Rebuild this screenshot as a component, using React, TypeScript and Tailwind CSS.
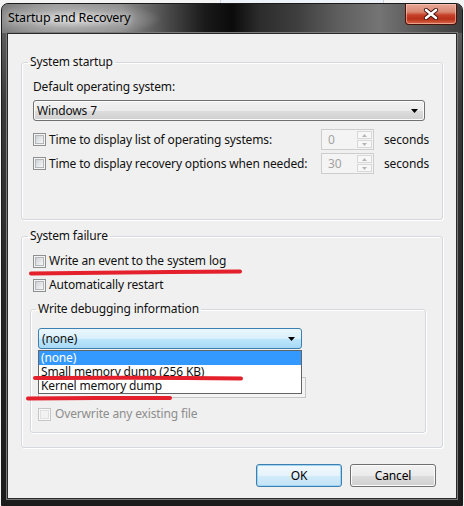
import React from "react";

function CheckBox({ disabled = false }: { disabled?: boolean }) {
  return (
    <span
      className={
        disabled
          ? "flex h-[13px] w-[13px] shrink-0 items-center justify-center border border-[#c6c6c6] bg-[#f7f7f7]"
          : "flex h-[13px] w-[13px] shrink-0 items-center justify-center border border-[#8e8f8f] bg-[#f4f4f4]"
      }
    >
      <span
        className={
          disabled
            ? "h-[9px] w-[9px] border border-[#e0e0e0] bg-[#f2f2f2]"
            : "h-[9px] w-[9px] border border-[#b3b6ba] bg-[linear-gradient(135deg,#cfd2d6,#f7f7f7)]"
        }
      />
    </span>
  );
}

function Arrow() {
  return (
    <svg width="7" height="4" viewBox="0 0 7 4" className="shrink-0">
      <path d="M0 0H7L3.5 4Z" fill="#000" />
    </svg>
  );
}

function Spin({ value }: { value: string }) {
  return (
    <div className="flex h-[21px] w-[53px] border border-[#cdcdcd] bg-[#f4f4f4]">
      <span className="flex-1 pl-[6px] leading-[19px] text-[#a3a3a3]">{value}</span>
      <div className="flex w-[17px] flex-col gap-px p-px">
        <span className="flex flex-1 items-center justify-center border border-[#d8d8d8] bg-[#f8f8f8]">
          <svg width="5" height="3" viewBox="0 0 5 3">
            <path d="M0 3H5L2.5 0Z" fill="#b5b5b5" />
          </svg>
        </span>
        <span className="flex flex-1 items-center justify-center border border-[#d8d8d8] bg-[#f8f8f8]">
          <svg width="5" height="3" viewBox="0 0 5 3">
            <path d="M0 0H5L2.5 3Z" fill="#b5b5b5" />
          </svg>
        </span>
      </div>
    </div>
  );
}

function TimeRow({ label, value }: { label: string; value: string }) {
  return (
    <div className="flex h-[21px] items-center">
      <div className="flex w-[288px] items-center gap-[3px]">
        <CheckBox />
        <span className="leading-[16px]">{label}</span>
      </div>
      <Spin value={value} />
      <span className="ml-[10px] leading-[16px]">seconds</span>
    </div>
  );
}

function CheckRow({ label }: { label: string }) {
  return (
    <div className="flex h-[16px] items-center gap-[3px]">
      <CheckBox />
      <span className="leading-[16px]">{label}</span>
    </div>
  );
}

function PushButton({ label, isDefault = false }: { label: string; isDefault?: boolean }) {
  return (
    <button
      className={
        isDefault
          ? "flex h-[23px] w-[86px] items-center justify-center rounded-[3px] border border-[#3c7fb1] bg-[linear-gradient(180deg,#f2f9fd_0%,#e5f3fb_50%,#d2ebfa_51%,#c4e4f7_100%)] shadow-[inset_0_0_0_1px_#9fd4f3] leading-[16px] text-black"
          : "flex h-[23px] w-[86px] items-center justify-center rounded-[3px] border border-[#707070] bg-[linear-gradient(180deg,#f2f2f2_0%,#ebebeb_50%,#dddddd_51%,#cfcfcf_100%)] shadow-[inset_0_0_0_1px_#fbfbfb] leading-[16px] text-black"
      }
    >
      {label}
    </button>
  );
}

export default function App() {
  return (
    <div className="relative h-[506px] w-[464px] overflow-hidden bg-[#f4f4f4] font-['Noto_Sans','Open_Sans',sans-serif] text-[12px] tracking-[-0.15px] text-[#111]">
      {/* strip of the window lying behind */}
      <div className="flex h-[3px]">
        <div className="ml-[220px] h-[3px] w-[164px] border-x border-[#c9d3e0] bg-[#eef3fa]" />
      </div>

      {/* window frame */}
      <div className="ml-px flex h-[503px] w-[462px] flex-col rounded-t-[7px] border border-[#1a1a1a] bg-[linear-gradient(180deg,#6a6a6a_0%,#3a3a3a_20%,#262626_60%,#1c1c1c_100%)]">
        {/* title bar */}
        <div className="flex h-[29px] shrink-0 items-start justify-between rounded-t-[6px] [background-image:radial-gradient(ellipse_90px_18px_at_70px_15px,rgba(220,220,220,0.95)_0%,rgba(175,175,175,0.6)_55%,rgba(150,150,150,0)_100%),linear-gradient(90deg,#7f7f7f_0%,#9a9a9a_12%,#8c8c8c_26%,#4a4a4a_36%,#1a1a1a_44%,#0b0b0b_50%,#2c2c2c_56%,#3e3e3e_64%,#5e5e5e_73%,#747474_82%,#5a5a5a_90%,#3e3e3e_100%)]">
          <span className="pl-[6px] pt-[5px] text-[12.5px] leading-[18px] text-black [text-shadow:0_0_6px_rgba(255,255,255,0.9)]">
            Startup and Recovery
          </span>
          <div className="mr-[5px] flex h-[21px] w-[52px] items-center justify-center rounded-b-[4px] border border-t-0 border-[#4a1208] bg-[linear-gradient(180deg,#e9a898_0%,#d98671_40%,#c7402a_55%,#b83019_75%,#d86a48_100%)] shadow-[inset_0_0_0_1px_rgba(255,210,200,0.55)]">
            <svg width="16" height="12" viewBox="0 0 16 12">
              <path d="M3 2L13 10M13 2L3 10" stroke="#3a0a04" strokeWidth="4.2" strokeLinecap="round" />
              <path d="M3 2L13 10M13 2L3 10" stroke="#ffffff" strokeWidth="2.6" strokeLinecap="round" />
            </svg>
          </div>
        </div>

        {/* client area */}
        <div className="mx-[5px] mb-[6px] flex h-[467px] w-[450px] flex-col border border-[#2a2a2a] bg-[#f0f0f0] shadow-[0_0_0_1px_#7a7a7a]">
          {/* System startup */}
          <fieldset className="ml-[13px] mt-[20px] h-[166px] w-[422px] rounded-[3px] border border-[#d5d9dd] shadow-[inset_1px_1px_0_#ffffff,1px_1px_0_#ffffff]">
            <legend className="ml-[6px] px-[2px] leading-[16px]">System startup</legend>
            <div className="flex flex-col pl-[11px]">
              <span className="mt-[9px] leading-[16px]">Default operating system:</span>
              <div className="mt-[5px] flex h-[21px] w-[392px] items-center justify-between rounded-[3px] border border-[#707070] bg-[linear-gradient(180deg,#f2f2f2_0%,#ebebeb_50%,#dddddd_51%,#cfcfcf_100%)] pl-[3px] pr-[6px] shadow-[inset_0_0_0_1px_#fbfbfb]">
                <span className="leading-[16px]">Windows 7</span>
                <Arrow />
              </div>
              <div className="mt-[8px]">
                <TimeRow label="Time to display list of operating systems:" value="0" />
              </div>
              <div className="mt-[3px]">
                <TimeRow label="Time to display recovery options when needed:" value="30" />
              </div>
            </div>
          </fieldset>

          {/* System failure */}
          <fieldset className="ml-[13px] mt-[8px] h-[220px] w-[422px] rounded-[3px] border border-[#d5d9dd] shadow-[inset_1px_1px_0_#ffffff,1px_1px_0_#ffffff]">
            <legend className="ml-[6px] px-[2px] leading-[16px]">System failure</legend>
            <div className="flex flex-col">
              <div className="mt-[9px] pl-[11px]">
                <CheckRow label="Write an event to the system log" />
              </div>
              <div className="mt-[8px] pl-[11px]">
                <CheckRow label="Automatically restart" />
              </div>

              <fieldset className="ml-[8px] mt-[8px] h-[132px] w-[396px] rounded-[3px] border border-[#d5d9dd] shadow-[inset_1px_1px_0_#ffffff,1px_1px_0_#ffffff]">
                <legend className="ml-[5px] px-[2px] leading-[16px]">Write debugging information</legend>
                <div className="flex flex-col pl-[7px]">
                  <div className="relative mt-[11px] h-[21px] w-[264px]">
                    <div className="flex h-[21px] w-[264px] items-center justify-between rounded-[3px] border border-[#3c7fb1] bg-[linear-gradient(180deg,#eaf6fd_0%,#d9f0fc_50%,#bee6fd_51%,#a7d9f5_100%)] pl-[3px] pr-[6px]">
                      <span className="leading-[16px]">(none)</span>
                      <Arrow />
                    </div>
                    {/* open drop-down list */}
                    <div className="absolute left-0 top-[22px] z-10 flex w-[264px] flex-col border border-[#646464] bg-white">
                      <span className="h-[14px] bg-[#3399ff] pl-[2px] leading-[14px] text-white">(none)</span>
                      <span className="h-[14px] pl-[2px] leading-[14px]">Small memory dump (256 KB)</span>
                      <span className="h-[14px] pl-[2px] leading-[14px]">Kernel memory dump</span>
                    </div>
                  </div>
                  {/* dump file path box, mostly covered by the open list */}
                  <div className="mt-[28px] h-[21px] w-[268px] border border-[#c6c6c6] bg-[#f4f4f4]" />
                  <div className="mt-[8px] flex h-[16px] items-center gap-[4px]">
                    <CheckBox disabled />
                    <span className="leading-[16px] text-[#8d8d8d]">Overwrite any existing file</span>
                  </div>
                </div>
              </fieldset>
            </div>
          </fieldset>

          {/* dialog buttons */}
          <div className="mt-[16px] flex justify-end gap-[8px] pr-[20px]">
            <PushButton label="OK" isDefault />
            <PushButton label="Cancel" />
          </div>
        </div>
      </div>

      {/* hand-drawn red underlines */}
      <svg className="pointer-events-none absolute inset-0 z-20" width="464" height="506" viewBox="0 0 464 506">
        <path d="M31 273.5C90 272.5 170 272 240 271.5" stroke="#e3202b" strokeWidth="4" strokeLinecap="round" fill="none" />
        <path d="M35 378C100 377.5 180 377.5 241 378.5" stroke="#e3202b" strokeWidth="4" strokeLinecap="round" fill="none" />
        <path d="M28 398.5C70 398 130 398 170 398" stroke="#e3202b" strokeWidth="4" strokeLinecap="round" fill="none" />
      </svg>
    </div>
  );
}
